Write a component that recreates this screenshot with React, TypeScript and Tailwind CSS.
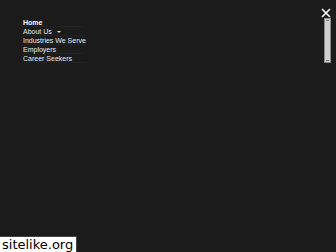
const items = ["Home", "About Us", "Industries We Serve", "Employers", "Career Seekers"];

export default function App() {
  return (
    <div className="relative h-[252px] w-[336px] overflow-hidden bg-[#1b1b1b] font-['Liberation_Sans',Arial,sans-serif]">
      <ul className="flex w-fit flex-col pl-[23px] pt-[18px]">
        {items.map((item, i) => (
          <li
            key={item}
            className={
              "flex h-[9px] items-center border-b border-[#232323] text-[7px] leading-[9px] text-[#ececec] " +
              (i === 0 ? "font-bold text-white" : "")
            }
          >
            {item}
            {item === "About Us" && (
              <span className="ml-[5px] mt-[2px] h-0 w-0 border-x-[2px] border-t-[2px] border-x-transparent border-t-[#e0e0e0]" />
            )}
          </li>
        ))}
      </ul>

      {/* close button */}
      <svg className="absolute left-[321px] top-[8px]" width="10" height="10" viewBox="0 0 10 10">
        <path d="M1 1 L9 9 M9 1 L1 9" stroke="#ffffff" strokeWidth="1.6" />
      </svg>

      {/* scrollbar */}
      <div className="absolute left-[324px] top-[18px] flex h-[45px] w-[7px] flex-col items-center justify-between border border-[#8a8a8a] bg-[#cfcfcf] py-[1px]">
        <div className="h-[1px] w-[3px] bg-[#777]" />
        <div className="h-[1px] w-[3px] bg-[#777]" />
      </div>

      {/* watermark */}
      <div className="absolute bottom-0 left-0 border-r border-t border-[#444] bg-white pl-[2px] pr-[3px] font-['DejaVu_Sans',sans-serif] text-[13px] leading-[15px] text-black">
        sitelike.org
      </div>
    </div>
  );
}
